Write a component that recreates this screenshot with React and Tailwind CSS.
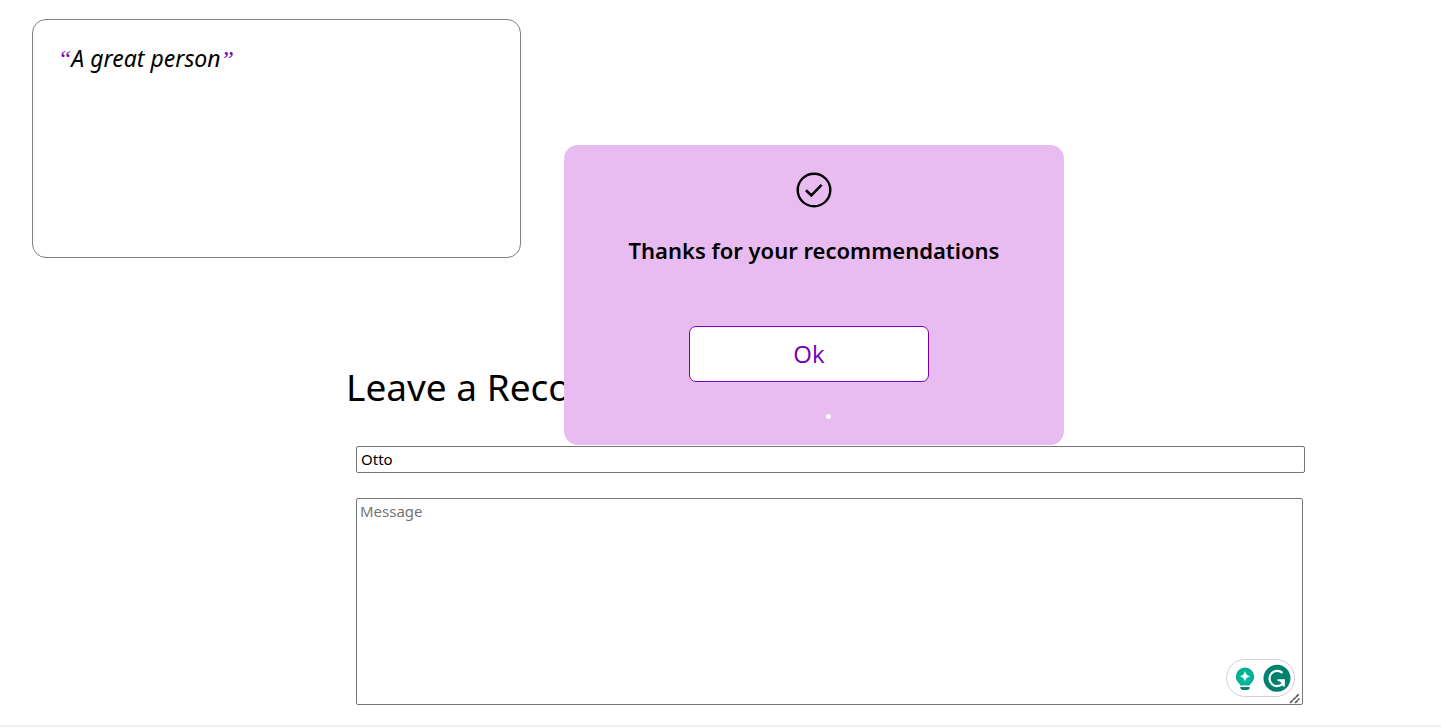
import React, { useState } from "react";

function Quote() {
  return (
    <section className="px-8 pt-[19px]">
      <blockquote className="h-[239px] w-[489px] rounded-[14px] border border-[#808080] px-[25px] pt-[22px] text-[23px] leading-8 italic">
        <span className="font-['Liberation_Serif',serif] text-2xl leading-8 text-[#7a00b8]">“</span>
        A great person
        <span className="font-['Liberation_Serif',serif] text-2xl leading-8 text-[#7a00b8]">”</span>
      </blockquote>
    </section>
  );
}

function AssistantBadge() {
  return (
    <div className="absolute right-2 bottom-2 flex h-[38px] w-[69px] items-center justify-between rounded-full border border-[#d0d0e0] bg-white pr-[3px] pl-2">
      <svg width="20" height="24" viewBox="0 0 20 24" aria-hidden="true">
        <defs>
          <radialGradient id="bulb" cx="50%" cy="55%" r="60%">
            <stop offset="0" stopColor="#00c3a4" />
            <stop offset="1" stopColor="#02a98c" />
          </radialGradient>
        </defs>
        <path d="M10 1.5A9.2 9.2 0 0 0 .8 10.7c0 3.2 1.7 5.3 3.8 7.3.5.5.7.9.9 1.5h9c.2-.6.4-1 .9-1.5 2.1-2 3.8-4.1 3.8-7.3A9.2 9.2 0 0 0 10 1.500z" fill="url(#bulb)" />
        <path d="M10 4.700c.8 3.600 2 4.800 5.600 5.600-3.600.8-4.800 2-5.600 5.600-.8-3.600-2-4.800-5.600-5.600 3.600-.8 4.800-2 5.600-5.600z" fill="#fff" />
        <path d="M5.300 21h9.400c0 1.800-1 3-2.700 3H8c-1.700 0-2.700-1.200-2.700-3z" fill="#00806b" />
      </svg>
      <svg width="28" height="28" viewBox="0 0 28 28" aria-hidden="true">
        <circle cx="14" cy="14.3" r="13.5" fill="#00816e" />
        <path d="M19.500 8.900A7.700 7.700 0 1 0 20 19.600" fill="none" stroke="#fff" strokeWidth="2.2" />
        <path d="M14.500 16.200h7M20.700 15.200v7.300" fill="none" stroke="#fff" strokeWidth="2" />
        <path d="M21.500 15.500v6.500l-5-5z" fill="#fff" />
      </svg>
    </div>
  );
}

function ResizeGrip() {
  return (
    <svg
      className="pointer-events-none absolute right-[2px] bottom-[1px] bg-white"
      width="12"
      height="12"
      viewBox="0 0 12 12"
      stroke="#555"
      strokeWidth="1.6"
      aria-hidden="true"
    >
      <path d="M1 11L10 2M6 11l4.500-4.500" fill="none" strokeDasharray="3.800 .4" />
    </svg>
  );
}

function RecommendationForm() {
  return (
    <section className="pt-[103px] pr-[136px] pl-[346px]">
      <h1 className="text-[37px] leading-[52px] whitespace-nowrap">Leave a Recommendation</h1>
      <form className="pt-[33px] pl-[10px]" onSubmit={(e) => e.preventDefault()}>
        <input
          type="text"
          aria-label="Name"
          defaultValue="Otto"
          className="block h-[27px] w-full rounded-[2px] border border-[#767676] bg-white px-1 pb-[2px] text-[15px] leading-5"
        />
        <div className="relative mt-[25px] mr-[2px]">
          <textarea
            aria-label="Message"
            placeholder="Message"
            className="block h-[207px] w-full resize rounded-[2px] border border-[#767676] bg-white px-[3px] py-[2px] text-[15px] leading-5 placeholder:text-[#757575]"
          />
          <ResizeGrip />
          <AssistantBadge />
        </div>
      </form>
    </section>
  );
}

function ThanksDialog({ onClose }) {
  return (
    <div
      role="dialog"
      aria-labelledby="thanks-title"
      className="absolute top-[145px] left-[564px] flex h-[300px] w-[500px] flex-col items-center rounded-[14px] bg-[#e8bcf0] pt-[27px]"
    >
      <svg width="36" height="36" viewBox="0 0 36 36" fill="none" stroke="#000" aria-hidden="true">
        <circle cx="18" cy="18" r="16.3" strokeWidth="2.4" />
        <path d="M10 18.200l5.300 5.200 10.300-10.600" strokeWidth="2.6" />
      </svg>
      <h2 id="thanks-title" className="pt-[26px] text-[22px] leading-8 font-semibold whitespace-nowrap">
        Thanks for your recommendations
      </h2>
      <button
        type="button"
        onClick={onClose}
        className="mt-[60px] mr-[10px] h-14 w-60 rounded-[7px] border border-[#7a00b8] bg-white font-['Open_Sans',sans-serif] text-2xl text-[#7300b5]"
      >
        Ok
      </button>
      <span className="mt-8 ml-[29px] size-[5px] rounded-full bg-white" />
    </div>
  );
}

export default function App() {
  const [open, setOpen] = useState(true);
  return (
    <div className="relative bg-white font-['Noto_Sans',sans-serif] text-black">
      <Quote />
      <RecommendationForm />
      <footer className="mt-5 h-[2px] bg-[#f1f1f1]" />
      {open && <ThanksDialog onClose={() => setOpen(false)} />}
    </div>
  );
}
